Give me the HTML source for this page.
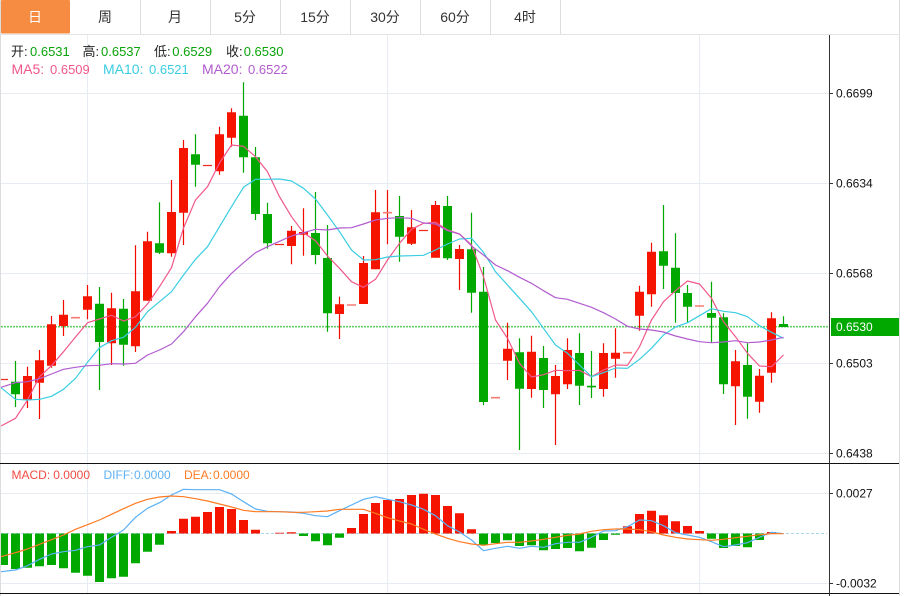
<!DOCTYPE html>
<html><head><meta charset="utf-8"><style>
html,body{margin:0;padding:0;background:#fff;width:907px;height:596px;overflow:hidden}
svg{position:absolute;left:0;top:0}
.t{font-family:"Liberation Sans","Noto Sans CJK SC",sans-serif}
.tab{font-size:14px;fill:#333;text-anchor:middle}
.ax{font-size:12px;fill:#111}
</style></head><body>
<svg width="907" height="596" viewBox="0 0 907 596" xmlns="http://www.w3.org/2000/svg">
<rect x="0" y="0" width="900" height="596" fill="#fff"/>
<!-- frame -->
<path d="M0.5 0V596M899.5 0V596" stroke="#dcdcdc" fill="none"/>
<path d="M0 34.5H900" stroke="#e4e4e4" fill="none" stroke-width="1"/>
<!-- tabs -->
<rect x="1" y="0" width="69" height="33.5" rx="1" fill="#f58c41"/>
<path d="M140.5 0V34M210.5 0V34M280.5 0V34M350.5 0V34M420.5 0V34M490.5 0V34M560.5 0V34" stroke="#dddddd" fill="none"/>
<g class="t tab">
<text x="35" y="22" style="fill:#fff">日</text>
<text x="105" y="22">周</text>
<text x="175" y="22">月</text>
<text x="245" y="22">5分</text>
<text x="315" y="22">15分</text>
<text x="385" y="22">30分</text>
<text x="455" y="22">60分</text>
<text x="525" y="22">4时</text>
</g>
<!-- grid -->
<path d="M1 93.5H829M1 183.5H829M1 273.5H829M1 363.5H829M1 453.5H829M1 493.5H829M1 583.5H829M87.5 35V593M387.5 35V593M699.5 35V593" stroke="#e6ecf1" fill="none"/>
<!-- info -->
<g class="t" font-size="13">
<text x="11" y="56" fill="#222">开:</text><text x="30" y="56" fill="#0aa30a">0.6531</text>
<text x="82.5" y="56" fill="#222">高:</text><text x="101" y="56" fill="#0aa30a">0.6537</text>
<text x="154" y="56" fill="#222">低:</text><text x="172.3" y="56" fill="#0aa30a">0.6529</text>
<text x="226" y="56" fill="#222">收:</text><text x="243.7" y="56" fill="#0aa30a">0.6530</text>
<text x="11.5" y="74" fill="#f0588a" font-size="14">MA5:</text><text x="50" y="74" fill="#f0588a">0.6509</text>
<text x="103" y="74" fill="#3bcde2" font-size="14">MA10:</text><text x="149" y="74" fill="#3bcde2">0.6521</text>
<text x="202" y="74" fill="#b25ccf" font-size="14">MA20:</text><text x="248" y="74" fill="#b25ccf">0.6522</text>
</g>
<!-- dotted last price -->
<path d="M1 326.7H829" stroke="#66cc66" stroke-dasharray="2 1" fill="none" stroke-width="1.6"/>
<!-- wicks red -->
<path fill="none" stroke="#f00a00" stroke-width="1.2" d="M27.5 366.7V408M39.5 350V419M51.5 316V367.7M63.5 300V336M87.5 285V319.3M111.5 292.7V365M135.5 245.3V352M147.5 231.7V300.7M171.5 180V256.7M183.5 140V245M219.5 126.7V174.7M231.5 108.3V146.7M291.5 226V264.3M303.5 208.3V255.7M339.5 296.7V339M363.5 256V304M375.5 190V269.3M387.5 190V244.3M411.5 210V245M435.5 201V257.7M459.5 245V290M507.5 322.7V380M531.5 335.7V397.7M555.5 365V445M567.5 338.3V389M603.5 343.3V396.7M615.5 328.3V377.7M639.5 285.7V330.7M651.5 242.7V306.7M735.5 350V425M759.5 369V412.7M771.5 312.3V382.7"/>
<!-- wicks green -->
<path fill="none" stroke="#00a800" stroke-width="1.2" d="M15.5 361V407M99.5 287V390M123.5 299V365.7M159.5 202.3V254M195.5 134.3V186.7M243.5 82.3V172.7M255.5 147V220M267.5 202.7V248.7M315.5 192V264.3M327.5 225V331.7M399.5 196V261.7M447.5 196V260M471.5 212.7V312.7M483.5 267V405M519.5 338.3V450M543.5 346V408M579.5 333.3V405M591.5 351V398M663.5 205V289M675.5 233.3V322.7M687.5 285V322.3M711.5 281.7V342.7M723.5 313.3V394M747.5 343.3V418.7M783.5 316.3V327"/>
<!-- bodies red -->
<path fill="#f51400" d="M23 376H32V400H23zM35 360.3H44V382.7H35zM47 324.3H56V365.7H47zM59 314.7H68V326H59zM83 296.3H92V309.7H83zM107 308.3H116V343.3H107zM131 291.3H140V346.3H131zM143 241.3H152V300.7H143zM167 212H176V253.3H167zM179 148H188V212.7H179zM215 134.3H224V171.3H215zM227 112.3H236V137.7H227zM287 230.7H296V246H287zM299 232H308V234.7H299zM335 304.3H344V314H335zM359 263H368V304H359zM371 212.3H380V269.3H371zM407 227.3H416V243.7H407zM431 205H440V257.7H431zM455 249H464V259H455zM503 348.7H512V360.7H503zM527 351.7H536V389H527zM551 376H560V394.3H551zM563 350H572V384.3H563zM599 353H608V389H599zM611 352.7H620V358.7H611zM635 291.7H644V315.7H635zM647 251.7H656V294.3H647zM731 361.3H740V386.3H731zM755 375.7H764V401.7H755zM767 318.3H776V372.7H767z"/>
<!-- doji red -->
<path fill="none" stroke="#f22a20" stroke-width="1.3" d="M1 379.5H8M203 165.5H212M275 244.5H284M419 230.5H428"/>
<path fill="none" stroke="#f87a72" stroke-width="1.6" d="M71 317.7H80M347 305H356M383 212.7H392M491 397.7H500M623 352.7H632M695 306H704"/>
<!-- bodies green -->
<path fill="#00a800" d="M11 381.7H20V394.3H11zM95 303.7H104V342H95zM119 308.7H128V344.7H119zM155 243.3H164V252.7H155zM191 154.3H200V164.7H191zM239 115.7H248V157.3H239zM251 157.3H260V214H251zM263 214H272V243.3H263zM311 233H320V255H311zM323 258H332V313.3H323zM395 216H404V236.7H395zM443 206H452V258.3H443zM467 249.3H476V292.7H467zM479 291.7H488V402H479zM515 352.3H524V388.7H515zM539 358H548V390H539zM575 353H584V385.7H575zM587 385.8H596V387.4H587zM659 251.3H668V265.7H659zM671 267.7H680V293H671zM683 293H692V306.7H683zM707 313H716V317.7H707zM719 317.3H728V384.3H719zM743 365H752V396.7H743zM779 324H788V327H779z"/>
<!-- MA lines -->
<g fill="none" stroke-width="1.2" stroke-linejoin="round">
<path stroke="#f0588a" d="M1 426L15.5 418.3 27.5 400 39.5 376.7 51.5 365.7 63.5 351.7 75.5 337 87.5 322.7 99.5 319 111.5 315.3 123.5 321 135.5 316.7 147.5 304 159.5 286.7 171.5 267.7 183.5 228 195.5 200 207.5 186.7 219.5 163 231.5 145 243.5 146.3 255.5 156.7 267.5 171.7 279.5 196.7 291.5 216.7 303.5 232.7 315.5 240.7 327.5 256 339.5 268.3 351.5 281.7 363.5 287.3 375.5 279.3 387.5 260 399.5 243.3 411.5 229.3 423.5 223.3 435.5 222.3 447.5 230 459.5 234 471.5 245 483.5 276.7 495.5 320 507.5 338.3 519.5 363.3 531.5 377 543.5 374.7 555.5 370.3 567.5 370.7 579.5 370.3 591.5 376.7 603.5 370 615.5 365 627.5 365.3 639.5 346.7 651.5 320 663.5 301.7 675.5 290.7 687.5 281 699.5 284 711.5 298.3 723.5 321.7 735.5 336.7 747.5 353.3 759.5 366 771.5 366.7 783.5 355"/>
<path stroke="#3bcde2" d="M1 387.7L15.5 399.3 27.5 400 39.5 399.3 51.5 396.3 63.5 389.3 75.5 378.3 87.5 362.3 99.5 347.7 111.5 340.7 123.5 337.3 135.5 327.3 147.5 311.7 159.5 301.7 171.5 291.7 183.5 275 195.5 259.3 207.5 246.7 219.5 226.7 231.5 206.7 243.5 187.3 255.5 179.3 267.5 179.3 279.5 179 291.5 181 303.5 188.3 315.5 199 327.5 215 339.5 231.7 351.5 250 363.5 260 375.5 259.7 387.5 257 399.5 256 411.5 255.7 423.5 255.3 435.5 250 447.5 244 459.5 239 471.5 238.3 483.5 252.3 495.5 271.7 507.5 285 519.5 298.3 531.5 311.7 543.5 328.3 555.5 345 567.5 353.3 579.5 365 591.5 376.7 603.5 372.7 615.5 368 627.5 368.3 639.5 359.3 651.5 348.3 663.5 335 675.5 327 687.5 322.7 699.5 315.7 711.5 308.7 723.5 311.3 735.5 312.7 747.5 316.7 759.5 325.7 771.5 332.3 783.5 338.3"/>
<path stroke="#b25ccf" d="M1 387.3L15.5 382.7 27.5 381.7 39.5 378.7 51.5 374 63.5 369.3 75.5 367.3 87.5 365.7 99.5 365.3 111.5 363.7 123.5 364 135.5 363.3 147.5 355 159.5 350 171.5 344 183.5 331.7 195.5 316.7 207.5 303.3 219.5 286.7 231.5 273.3 243.5 262.7 255.5 252.7 267.5 246.7 279.5 241.3 291.5 236 303.5 232.7 315.5 229.3 327.5 230 339.5 228 351.5 227.7 363.5 224 375.5 220 387.5 218.3 399.5 217.7 411.5 218.3 423.5 223 435.5 224 447.5 230.7 459.5 234 471.5 246 483.5 255 495.5 265 507.5 270.7 519.5 277.3 531.5 283.3 543.5 290.7 555.5 297.7 567.5 299.3 579.5 303.3 591.5 307.3 603.5 312.7 615.5 319 627.5 326.3 639.5 329 651.5 330 663.5 332 675.5 336 687.5 339 699.5 341.7 711.5 342.7 723.5 342 735.5 340.7 747.5 342.7 759.5 342 771.5 340 783.5 337.3"/>
</g>
<!-- panel separators -->
<path d="M0 463.5H899M0 593.5H899" stroke="#111" fill="none"/>
<!-- MACD legend -->
<g class="t" font-size="12">
<text x="11.5" y="479" fill="#f24a42">MACD:</text><text x="53.3" y="479" fill="#f24a42">0.0000</text>
<text x="103.5" y="479" fill="#5cb0f5">DIFF:</text><text x="134" y="479" fill="#5cb0f5">0.0000</text>
<text x="184" y="479" fill="#ff7a22">DEA:</text><text x="213" y="479" fill="#ff7a22">0.0000</text>
</g>
<!-- zero line -->
<path d="M1 533.5H827" stroke="#a9d8ea" stroke-dasharray="3 2" fill="none"/>
<!-- MACD green -->
<path fill="#00a800" d="M1 533.5H8V565H1zM11 533.5H20V569H11zM23 533.5H32V567.7H23zM35 533.5H44V566.3H35zM47 533.5H56V565H47zM59 533.5H68V568.3H59zM71 533.5H80V572.7H71zM83 533.5H92V575.7H83zM95 533.5H104V582H95zM107 533.5H116V578.3H107zM119 533.5H128V576.7H119zM131 533.5H140V563.3H131zM143 533.5H152V551.7H143zM155 533.5H164V544.7H155zM299 533.5H308V536H299zM311 533.5H320V541.3H311zM323 533.5H332V545.3H323zM335 533.5H344V537.7H335zM479 533.5H488V544.7H479zM491 533.5H500V543H491zM503 533.5H512V540.3H503zM515 533.5H524V546H515zM527 533.5H536V545.3H527zM539 533.5H548V550.3H539zM551 533.5H560V549H551zM563 533.5H572V548H563zM575 533.5H584V551.3H575zM587 533.5H596V547.7H587zM599 533.5H608V540H599zM611 533.5H620V534.7H611zM707 533.5H716V538.7H707zM719 533.5H728V548H719zM731 533.5H740V546H731zM743 533.5H752V547.3H743zM755 533.5H764V540H755z"/>
<!-- MACD red -->
<path fill="#f51400" d="M167 531H176V533.5H167zM179 518.7H188V533.5H179zM191 516.7H200V533.5H191zM203 512H212V533.5H203zM215 507H224V533.5H215zM227 509H236V533.5H227zM239 520H248V533.5H239zM251 529.7H260V533.5H251zM275 532.7H284V533.5H275zM287 532.3H296V533.5H287zM347 528H356V533.5H347zM359 514H368V533.5H359zM371 503H380V533.5H371zM383 500H392V533.5H383zM395 499H404V533.5H395zM407 495H416V533.5H407zM419 493.7H428V533.5H419zM431 495H440V533.5H431zM443 506H452V533.5H443zM455 513.3H464V533.5H455zM467 529.3H476V533.5H467zM623 526.3H632V533.5H623zM635 514H644V533.5H635zM647 510.7H656V533.5H647zM659 515.3H668V533.5H659zM671 521.3H680V533.5H671zM683 526H692V533.5H683zM695 531H704V533.5H695zM767 532H776V533.5H767z"/>
<!-- DIFF / DEA -->
<g fill="none" stroke-width="1.2" stroke-linejoin="round">
<path stroke="#5cb0f5" d="M1 571.7L15.5 570 27.5 565.7 39.5 559.3 51.5 554 63.5 551.7 75.5 550.3 87.5 546.7 99.5 545 111.5 537.3 123.5 530 135.5 517.3 147.5 508.3 159.5 502.7 171.5 495 183.5 489.3 195.5 489.7 207.5 489.7 219.5 489.7 231.5 494 243.5 501.7 255.5 509 267.5 511.3 279.5 511.7 291.5 512 303.5 513.3 315.5 515.7 327.5 516.7 339.5 510.7 351.5 505 363.5 499.3 375.5 496.7 387.5 499.3 399.5 501.7 411.5 505 423.5 509.3 435.5 515.7 447.5 525.7 459.5 532 471.5 540 483.5 550.7 495.5 548.3 507.5 546.3 519.5 548.3 531.5 546.3 543.5 547.3 555.5 543.7 567.5 542.3 579.5 542.3 591.5 537.3 603.5 531 615.5 530.7 627.5 526.7 639.5 520 651.5 520.7 663.5 525.7 675.5 532.7 687.5 535 699.5 537.3 711.5 541.7 723.5 546.7 735.5 545 747.5 542.7 759.5 537.3 771.5 532.3 783.5 533.7"/>
<path stroke="#ff7a22" d="M1 556.7L15.5 552.7 27.5 549 39.5 544.3 51.5 539.7 63.5 535 75.5 529.3 87.5 524.7 99.5 520 111.5 514.3 123.5 508.7 135.5 503.3 147.5 499.3 159.5 497 171.5 496 183.5 496.7 195.5 498.7 207.5 501 219.5 504 231.5 507 243.5 510.3 255.5 511.7 267.5 511.7 279.5 511.7 291.5 512.3 303.5 512.3 315.5 511.7 327.5 511 339.5 509.3 351.5 509.3 363.5 509.3 375.5 513.3 387.5 517.7 399.5 521 411.5 524 423.5 529.3 435.5 534 447.5 538.3 459.5 541.7 471.5 544 483.5 545.3 495.5 543.7 507.5 542.3 519.5 542.3 531.5 541 543.5 539.3 555.5 537.3 567.5 535.3 579.5 534 591.5 531.3 603.5 529.7 615.5 529 627.5 529 639.5 529.7 651.5 531.7 663.5 535 675.5 537.3 687.5 539 699.5 539.7 711.5 540.3 723.5 539.3 735.5 537.7 747.5 536.3 759.5 534.7 771.5 533.7 783.5 533.7"/>
</g>
<!-- axis -->
<path d="M829.5 35V596M830 93.5H833M830 183.5H833M830 273.5H833M830 363.5H833M830 453.5H833M830 493.5H833M830 583.5H833" stroke="#333" fill="none"/>
<rect x="831" y="318" width="68" height="18" fill="#00a800"/>
<g class="t ax">
<text x="836" y="97.5">0.6699</text>
<text x="836" y="187.5">0.6634</text>
<text x="836" y="277.5">0.6568</text>
<text x="836" y="331" style="fill:#fff">0.6530</text>
<text x="836" y="367.5">0.6503</text>
<text x="836" y="457.5">0.6438</text>
<text x="836" y="497.5">0.0027</text>
<text x="836" y="587.5">-0.0032</text>
</g>
</svg>
</body></html>
